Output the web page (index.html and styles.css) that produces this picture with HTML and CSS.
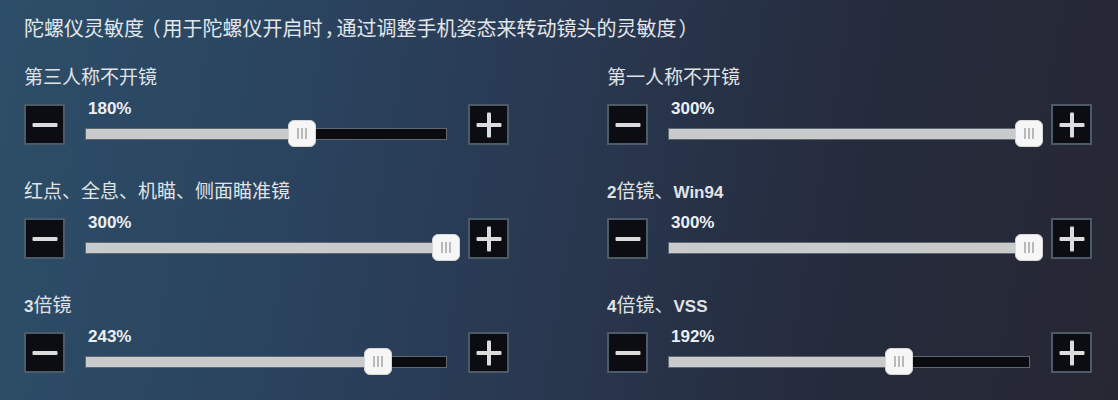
FILE: index.html
```html
<!DOCTYPE html>
<html lang="zh-CN">
<head>
    <meta charset="UTF-8">
    <meta name="viewport" content="width=device-width, initial-scale=1.0">
    <title>陀螺仪灵敏度</title>
    <link rel="stylesheet" href="styles.css">
</head>
<body>
    <div class="panel">
        <h1 class="title">陀螺仪灵敏度 <span class="punct">（</span>用于陀螺仪开启时<span class="punct">，</span>通过调整手机姿态来转动镜头的灵敏度<span class="punct">）</span></h1>

        <div class="settings">
            <div class="setting">
                <div class="label">第三人称不开镜</div>
                <div class="controls">
                    <button class="step minus"></button>
                    <div class="slider">
                        <span class="value">180%</span>
                        <div class="track">
                            <div class="fill" style="width: 60%"></div>
                            <div class="thumb" style="left: 60%"><i></i><i></i><i></i></div>
                        </div>
                    </div>
                    <button class="step plus"></button>
                </div>
            </div>

            <div class="setting">
                <div class="label">第一人称不开镜</div>
                <div class="controls">
                    <button class="step minus"></button>
                    <div class="slider">
                        <span class="value">300%</span>
                        <div class="track">
                            <div class="fill" style="width: 100%"></div>
                            <div class="thumb" style="left: 100%"><i></i><i></i><i></i></div>
                        </div>
                    </div>
                    <button class="step plus"></button>
                </div>
            </div>

            <div class="setting">
                <div class="label">红点、全息、机瞄、侧面瞄准镜</div>
                <div class="controls">
                    <button class="step minus"></button>
                    <div class="slider">
                        <span class="value">300%</span>
                        <div class="track">
                            <div class="fill" style="width: 100%"></div>
                            <div class="thumb" style="left: 100%"><i></i><i></i><i></i></div>
                        </div>
                    </div>
                    <button class="step plus"></button>
                </div>
            </div>

            <div class="setting">
                <div class="label"><b>2</b>倍镜、<b>Win94</b></div>
                <div class="controls">
                    <button class="step minus"></button>
                    <div class="slider">
                        <span class="value">300%</span>
                        <div class="track">
                            <div class="fill" style="width: 100%"></div>
                            <div class="thumb" style="left: 100%"><i></i><i></i><i></i></div>
                        </div>
                    </div>
                    <button class="step plus"></button>
                </div>
            </div>

            <div class="setting">
                <div class="label"><b>3</b>倍镜</div>
                <div class="controls">
                    <button class="step minus"></button>
                    <div class="slider">
                        <span class="value">243%</span>
                        <div class="track">
                            <div class="fill" style="width: 81%"></div>
                            <div class="thumb" style="left: 81%"><i></i><i></i><i></i></div>
                        </div>
                    </div>
                    <button class="step plus"></button>
                </div>
            </div>

            <div class="setting">
                <div class="label"><b>4</b>倍镜、<b>VSS</b></div>
                <div class="controls">
                    <button class="step minus"></button>
                    <div class="slider">
                        <span class="value">192%</span>
                        <div class="track">
                            <div class="fill" style="width: 64%"></div>
                            <div class="thumb" style="left: 64%"><i></i><i></i><i></i></div>
                        </div>
                    </div>
                    <button class="step plus"></button>
                </div>
            </div>
        </div>
    </div>
</body>
</html>
```

FILE: styles.css
```css
html, body {
    margin: 0;
    padding: 0;
    height: 100%;
}

body {
    font-family: "Noto Sans CJK SC", "Noto Sans", sans-serif;
    color: #dfe3e7;
    background: linear-gradient(100deg, #2d4e68 0%, #2a4460 25%, #293850 50%, #252b3c 75%, #272733 100%);
    overflow: hidden;
}

.panel {
    padding: 16px 24px 0;
}

.title {
    margin: 0 0 24px;
    font-size: 20px;
    font-weight: normal;
    line-height: 24px;
    color: #e2e6ea;
}

/* narrow brackets and comma, as the game font draws them */
.title .punct {
    font-feature-settings: "halt";
    margin: 0 2px;
}

.settings {
    display: grid;
    grid-template-columns: 583px 485px;
    row-gap: 33px;
}

.label {
    height: 24px;
    font-size: 19px;
    line-height: 24px;
    color: #e0e3e6;
    margin-bottom: 16px;
}

.label b {
    font-family: "Liberation Sans", Arial, sans-serif;
    font-weight: bold;
    font-size: 17px;
    line-height: 1;
}

.controls {
    display: flex;
    align-items: flex-start;
    gap: 20px;
}

.step {
    position: relative;
    box-sizing: border-box;
    width: 41px;
    height: 41px;
    flex: 0 0 41px;
    padding: 0;
    background-color: #0b0d12;
    border: 2px solid #4d5a68;
    cursor: pointer;
}

.step::before,
.step::after {
    content: "";
    position: absolute;
    left: 50%;
    top: 50%;
    background-color: #dcdcdc;
    border-radius: 1px;
}

.step::before {
    width: 25px;
    height: 4px;
    transform: translate(-50%, -50%);
}

.plus::after {
    width: 4px;
    height: 25px;
    transform: translate(-50%, -50%);
}

.minus::after {
    display: none;
}

.slider {
    width: 362px;
    flex: 0 0 362px;
    height: 41px;
    display: flex;
    flex-direction: column;
    margin-right: 1px;
}

.value {
    font-family: "Liberation Sans", Arial, sans-serif;
    font-weight: bold;
    font-size: 17px;
    line-height: 16px;
    margin: -3px 0 0 3px;
    color: #eceff2;
}

.track {
    position: relative;
    margin-top: 11px;
    height: 12px;
    box-sizing: border-box;
    background-color: #0a0c10;
    border: 1px solid #5e6873;
}

.fill {
    height: 100%;
    background-color: #c9cacb;
}

/* handle is centred on the current value */
.thumb {
    position: absolute;
    top: -9px;
    width: 28px;
    height: 27px;
    margin-left: -14px;
    box-sizing: border-box;
    background-color: #f6f6f6;
    border: 1px solid #d6d6d6;
    border-radius: 6px;
    display: flex;
    justify-content: center;
    align-items: center;
    gap: 2px;
}

.thumb i {
    width: 2px;
    height: 11px;
    background-color: #b9b9b9;
}
```
